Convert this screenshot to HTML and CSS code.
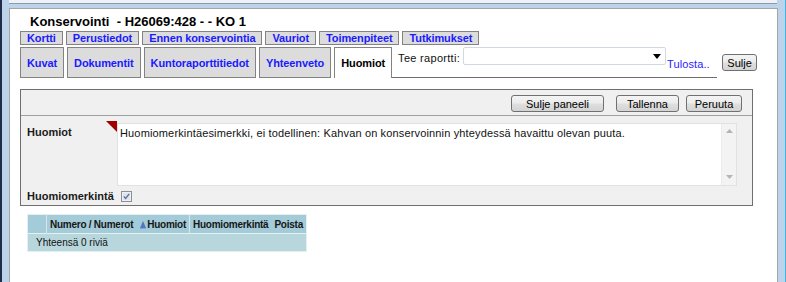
FILE: index.html
```html
<!DOCTYPE html>
<html lang="fi">
<head>
  <meta charset="UTF-8">
  <title>Konservointi - H26069:428 - - KO 1</title>
  <link rel="stylesheet" href="styles.css">
</head>
<body>
  <div class="topstrip"></div>
  <div class="window">
    <h1 class="title">Konservointi&nbsp; <span class="title-id">- H26069:428 - - KO 1</span></h1>

    <div class="tabs tabs-small">
      <a class="tab">Kortti</a>
      <a class="tab">Perustiedot</a>
      <a class="tab">Ennen konservointia</a>
      <a class="tab">Vauriot</a>
      <a class="tab">Toimenpiteet</a>
      <a class="tab">Tutkimukset</a>
    </div>

    <div class="tabs tabs-big">
      <a class="tab">Kuvat</a>
      <a class="tab">Dokumentit</a>
      <a class="tab">Kuntoraporttitiedot</a>
      <a class="tab">Yhteenveto</a>
      <span class="tab active">Huomiot</span>
      <div class="report">
        <label class="report-label">Tee raportti:</label>
        <div class="select">
          <svg width="8" height="5" viewBox="0 0 8 5"><path d="M0 0H8L4 5Z" fill="#000"/></svg>
        </div>
        <a class="print">Tulosta..</a>
      </div>
      <button class="btn btn-close">Sulje</button>
    </div>

    <div class="panel">
      <div class="panel-bar">
        <button class="btn btn-panel">Sulje paneeli</button>
        <button class="btn btn-save">Tallenna</button>
        <button class="btn btn-cancel">Peruuta</button>
      </div>
      <div class="panel-body">
        <div class="field">
          <div class="field-label required">Huomiot</div>
          <div class="notes">
            <div class="notes-text">Huomiomerkintäesimerkki, ei todellinen: Kahvan on konservoinnin yhteydessä havaittu olevan puuta.</div>
            <div class="scroll">
              <svg width="7" height="4" viewBox="0 0 7 4"><path d="M0 4L3.5 0L7 4Z" fill="#b4b4b4"/></svg>
              <svg width="7" height="4" viewBox="0 0 7 4"><path d="M0 0H7L3.5 4Z" fill="#b4b4b4"/></svg>
            </div>
          </div>
        </div>
        <div class="field field-check">
          <div class="field-label">Huomiomerkintä</div>
          <svg class="check" width="11" height="11" viewBox="0 0 11 11">
            <rect x="0.5" y="0.5" width="10" height="10" fill="#eef0f4" stroke="#8e8f8f"/>
            <rect x="2" y="2" width="7" height="7" fill="#dfe4ec"/>
            <path d="M2.8 5.4L4.6 7.4L8.2 2.8" fill="none" stroke="#5a6ea8" stroke-width="1.3"/>
          </svg>
        </div>
      </div>
    </div>

    <table class="grid">
      <thead>
        <tr>
          <th class="col-blank"></th>
          <th class="col-num">Numero / Numerot</th>
          <th class="col-notes">
            <svg class="sort" width="6" height="8" viewBox="0 0 6 8"><path d="M3 0L6 7H0Z" fill="#4f78c4"/><rect x="0" y="7" width="6" height="1" fill="#8aa6d8"/></svg>Huomiot
          </th>
          <th class="col-mark">Huomiomerkintä</th>
          <th class="col-del">Poista</th>
        </tr>
      </thead>
      <tbody>
        <tr>
          <td class="total" colspan="5">Yhteensä 0 riviä</td>
        </tr>
      </tbody>
    </table>
  </div>
</body>
</html>
```

FILE: styles.css
```css
body {
  margin: 0;
  height: 282px;
  overflow: hidden;
  background-color: #bcd3ea;
  border-left: 2px solid #1f2d4b;
  border-right: 1px solid #3bb4e8;
  font-family: "Liberation Sans", Arial, sans-serif;
  font-size: 11px;
  color: #000;
}
.topstrip {
  height: 3px;
  margin-left: 7px;
  width: 768px;
  background-color: #eef2f7;
  border-bottom: 1px solid #8d9aa9;
  margin-bottom: 4px;
}
.window {
  margin-left: 7px;
  width: 767px;
  height: 280px;
  background-color: #fff;
  border: 1px solid #a5a5a5;
}
.title {
  margin: 4px 0 0 20px;
  font-size: 13px;
  line-height: 17px;
  font-weight: bold;
  white-space: pre;
}
.tabs {
  display: flex;
  margin-left: 10px;
}
.tab {
  display: flex;
  align-items: center;
  margin-right: 3px;
  padding: 0 6px;
  background-color: #dcdcdc;
  border: 1px solid #838383;
  color: #1a1aff;
  font-weight: bold;
  letter-spacing: -0.1px;
  cursor: pointer;
}
.tabs-small {
  margin-top: 1px;
}
.tabs-small .tab {
  height: 12px;
  line-height: 12px;
}
.tabs-big {
  margin-top: 2px;
  align-items: flex-start;
}
.tabs-big .tab {
  height: 29px;
}
.tab.active {
  margin-right: 0;
  height: 30px;
  background-color: #fff;
  border-bottom: none;
  color: #000;
}
.report {
  display: flex;
  align-items: flex-start;
  width: 325px;
  height: 30px;
  border-bottom: 1px solid #6f6f6f;
}
.report-label {
  margin: 5px 0 0 6px;
  line-height: 13px;
  letter-spacing: 0.3px;
  color: #111;
}
.select {
  display: flex;
  justify-content: flex-end;
  align-items: center;
  width: 203px;
  height: 18px;
  margin-left: 3px;
  padding-right: 4px;
  box-sizing: border-box;
  background-color: #fff;
  border: 1px solid #d2d8e2;
  border-radius: 2px;
}
.print {
  margin: 11px 0 0 1px;
  color: #2b1bff;
  line-height: 13px;
  letter-spacing: 0.1px;
  cursor: pointer;
}
.btn {
  height: 17px;
  padding: 0 6px;
  font-family: "Liberation Sans", Arial, sans-serif;
  font-size: 11px;
  line-height: 14px;
  color: #000;
  background: linear-gradient(#f4f4f4, #ececec 45%, #dedede 55%, #d4d4d4);
  border: 1px solid #707070;
  border-radius: 3px;
  cursor: pointer;
}
.btn-close {
  width: 35px;
  margin: 7px 0 0 5px;
  padding: 0;
}
.panel {
  width: 731px;
  margin: 11px 0 0 10px;
  background-color: #f0f0f0;
  border: 1px solid #6f6f6f;
}
.panel-bar {
  display: flex;
  justify-content: flex-end;
  height: 26px;
  padding: 5px 10px 0 0;
  box-sizing: border-box;
  border-bottom: 1px solid #a0a0a0;
}
.btn-panel {
  width: 93px;
  margin-right: 12px;
}
.btn-save {
  width: 63px;
  margin-right: 7px;
}
.btn-cancel {
  width: 56px;
}
.panel-body {
  padding: 6px 0 3px 6px;
}
.field {
  display: flex;
  align-items: flex-start;
}
.field-label {
  position: relative;
  width: 90px;
  padding-top: 4px;
  font-weight: bold;
  color: #1a1a1a;
}
.field-label.required::after {
  content: "";
  position: absolute;
  top: -1px;
  right: 0;
  border-top: 11px solid #a30000;
  border-left: 11px solid transparent;
}
.notes {
  display: flex;
  width: 620px;
  height: 63px;
  margin-top: 1px;
  background-color: #fff;
  border: 1px solid #e2e2e2;
  box-sizing: border-box;
}
.notes-text {
  flex: 1;
  padding: 3px 0 0 2px;
  line-height: 13px;
  letter-spacing: 0.15px;
  color: #111;
}
.scroll {
  display: flex;
  flex-direction: column;
  justify-content: space-between;
  align-items: center;
  width: 15px;
  padding: 5px 0 6px;
  box-sizing: border-box;
  background-color: #f3f3f3;
  border-left: 1px solid #ececec;
}
.field-check {
  margin-top: 4px;
  align-items: center;
}
.field-check .field-label {
  padding-top: 0;
  width: 94px;
}
.grid {
  margin: 8px 0 0 17px;
  border-collapse: collapse;
  border: 1px solid #e6f0f3;
}
.grid th {
  height: 18px;
  padding: 0 3px;
  background-color: #a3cbd8;
  color: #161616;
  font-weight: bold;
  font-size: 10px;
  letter-spacing: -0.25px;
  text-align: left;
  white-space: nowrap;
}
.grid .col-blank {
  width: 12px;
  border-right: 1px solid #d7e7ec;
}
.grid .col-notes {
  padding-left: 4px;
  border-right: 1px solid #d7e7ec;
}
.sort {
  margin-right: 1px;
  vertical-align: -1px;
}
.grid td {
  height: 17px;
  padding: 0 0 0 8px;
  background-color: #b7d7dd;
  color: #111;
  font-size: 10px;
  border-top: 1px solid #e6f0f3;
}
```
